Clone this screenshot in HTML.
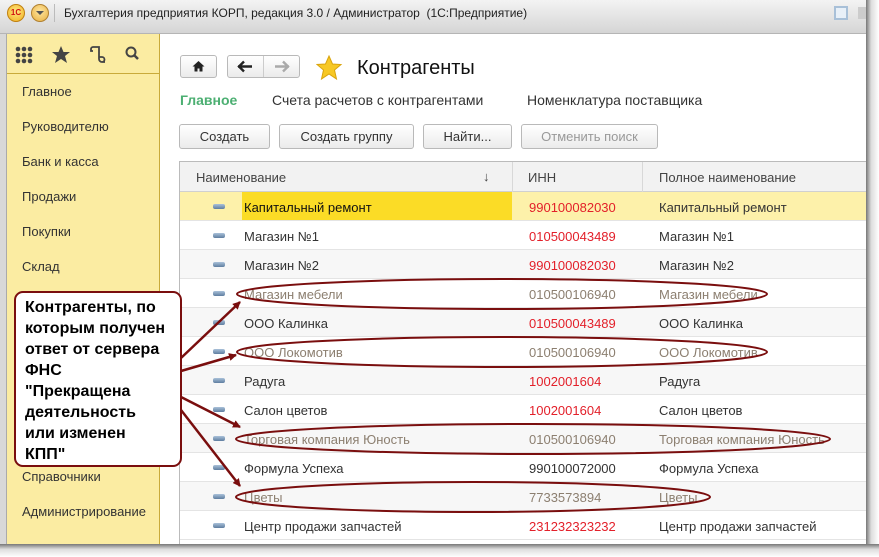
<!DOCTYPE html>
<html><head><meta charset="utf-8"><style>
*{margin:0;padding:0;box-sizing:border-box}
body{width:879px;height:557px;background:#fff;position:relative;overflow:hidden;font-family:"Liberation Sans",Arial,sans-serif;font-size:13px;color:#333}
.a{position:absolute}
.btn{position:absolute;height:25px;border:1px solid #b9b9b9;border-radius:3px;background:linear-gradient(#fff,#ebebeb);text-align:center;line-height:23px;color:#333;font-size:13px}
.row{position:absolute;left:180px;width:686px;height:29px;border-bottom:1px solid #e4e4e4}
.row div{position:absolute;top:0;line-height:31px;white-space:nowrap}
.row div.ic{left:33px;top:12px;width:12px;height:5px;border-radius:2px;background:linear-gradient(#a9c1d9,#5f7ea0);}
.n{left:64px}.i{left:349px}.f{left:479px}
.g{color:#8c7f70}.r{color:#e3202a}
.side div{position:absolute;left:22px;color:#333;font-size:13px}
</style></head><body>
<div class="a" style="left:0;top:0;width:866px;height:34px;background:linear-gradient(#f3f3f3,#d5d5d5);border-bottom:1px solid #b5b5b5"></div>
<div class="a" style="left:7px;top:4px;width:18px;height:18px;border-radius:50%;background:radial-gradient(circle at 50% 40%,#ffe680,#f0b020);border:1px solid #c08010;font-size:8px;font-weight:bold;color:#d01010;text-align:center;line-height:16px">1С</div>
<div class="a" style="left:31px;top:4px;width:18px;height:18px;border-radius:50%;background:radial-gradient(circle at 50% 40%,#ffe6a0,#e8b040);border:1px solid #b08030"></div>
<div class="a" style="left:36px;top:11px;width:0;height:0;border-left:4px solid transparent;border-right:4px solid transparent;border-top:4px solid #555"></div>
<div class="a" style="left:54px;top:4px;width:1px;height:18px;background:#bbb"></div>
<div class="a" style="left:64px;top:6px;font-size:12px;color:#222">Бухгалтерия предприятия КОРП, редакция 3.0 / Администратор &nbsp;(1С:Предприятие)</div>
<div class="a" style="left:834px;top:6px;width:14px;height:14px;border:2px solid #a8c0d8;background:#e8f0f8"></div>
<div class="a" style="left:858px;top:7px;width:8px;height:12px;background:#ccc"></div>
<div class="a" style="left:0;top:34px;width:7px;height:511px;background:#d8d8d8;border-right:1px solid #aaa"></div>
<div class="a side" style="left:7px;top:34px;width:153px;height:511px;background:#fbeca2;border-right:1px solid #c9aa3a">
<div class="a" style="left:0;top:0;width:152px;height:40px;border-bottom:1px solid #c9aa3a;position:absolute"></div>
</div>
<svg class="a" style="left:0;top:34px" width="160" height="40">
<g fill="#444"><circle cx="18" cy="15" r="2.3"/><circle cx="24" cy="15" r="2.3"/><circle cx="30" cy="15" r="2.3"/><circle cx="18" cy="21" r="2.3"/><circle cx="24" cy="21" r="2.3"/><circle cx="30" cy="21" r="2.3"/><circle cx="18" cy="27" r="2.3"/><circle cx="24" cy="27" r="2.3"/><circle cx="30" cy="27" r="2.3"/>
<polygon points="61,12 63.5,18 70,18 65,22 67,29 61,25 55,29 57,22 52,18 58.5,18"/></g>
<path d="M93 13h6v12a3 3 0 0 0 3 3h3M93 13a2 2 0 0 0-2 2v2h2M99 13v12M102 28a2.5 2.5 0 0 0 0-5h-3" fill="none" stroke="#444" stroke-width="1.8"/>
<circle cx="131" cy="18" r="4.5" fill="none" stroke="#444" stroke-width="2"/><path d="M134 21l4 4" stroke="#444" stroke-width="2.5"/>
</svg>
<div class="side">
<div style="top:84px">Главное</div>
<div style="top:119px">Руководителю</div>
<div style="top:154px">Банк и касса</div>
<div style="top:189px">Продажи</div>
<div style="top:224px">Покупки</div>
<div style="top:259px">Склад</div>
<div style="top:469px">Справочники</div>
<div style="top:504px">Администрирование</div>
</div>
<div class="btn" style="left:180px;top:55px;width:37px;height:23px"></div>
<svg class="a" style="left:180px;top:55px" width="37" height="23"><path d="M18.5 6l-6 5.5h2v5h3v-3h2v3h3v-5h2z" fill="#222"/></svg>
<div class="btn" style="left:227px;top:55px;width:73px;height:23px"></div>
<div class="a" style="left:263px;top:56px;width:1px;height:21px;background:#ccc"></div>
<svg class="a" style="left:227px;top:55px" width="73" height="23"><path d="M11 11.5h14M17 6.5l-5 5 5 5" fill="none" stroke="#222" stroke-width="2.4"/><path d="M48 11.5h14M56 6.5l5 5-5 5" fill="none" stroke="#aaa" stroke-width="2.4"/></svg>
<svg class="a" style="left:316px;top:55px" width="28" height="26"><polygon points="13,1 16.5,9 25,9.5 18.5,15 20.5,24 13,19 5.5,24 7.5,15 1,9.5 9.5,9" fill="#f7c824" stroke="#d9a40e"/></svg>
<div class="a" style="left:357px;top:57px;font-size:20px;color:#111">Контрагенты</div>
<div class="a" style="left:180px;top:92px;font-size:14px;font-weight:bold;color:#4caf72">Главное</div>
<div class="a" style="left:272px;top:92px;font-size:14px;color:#333">Счета расчетов с контрагентами</div>
<div class="a" style="left:527px;top:92px;font-size:14px;color:#333">Номенклатура поставщика</div>
<div class="btn" style="left:179px;top:124px;width:91px">Создать</div>
<div class="btn" style="left:279px;top:124px;width:135px">Создать группу</div>
<div class="btn" style="left:423px;top:124px;width:89px">Найти...</div>
<div class="btn" style="left:521px;top:124px;width:137px;color:#999">Отменить поиск</div>
<div class="a" style="left:179px;top:161px;width:687px;height:384px;border-left:1px solid #bbb;border-top:1px solid #bbb"></div>
<div class="a" style="left:180px;top:162px;width:686px;height:30px;background:#f2f2f2;border-bottom:1px solid #d0d0d0"></div>
<div class="a" style="left:512px;top:162px;width:1px;height:30px;background:#d8d8d8"></div>
<div class="a" style="left:642px;top:162px;width:1px;height:30px;background:#d8d8d8"></div>
<div class="a" style="left:196px;top:170px;color:#444">Наименование</div>
<div class="a" style="left:483px;top:169px;color:#444">↓</div>
<div class="a" style="left:528px;top:170px;color:#444">ИНН</div>
<div class="a" style="left:659px;top:170px;color:#444">Полное наименование</div>
<div class="row" style="top:192px;background:#fdf1aa"><div style="left:62px;width:270px;height:28px;background:#fbdc26"></div><div class="ic"></div><div class="n" style="color:#111">Капитальный ремонт</div><div class="i r">990100082030</div><div class="f">Капитальный ремонт</div></div>
<div class="row" style="top:221px"><div class="ic"></div><div class="n">Магазин №1</div><div class="i r">010500043489</div><div class="f">Магазин №1</div></div>
<div class="row" style="top:250px;background:#f7f7f7"><div class="ic"></div><div class="n">Магазин №2</div><div class="i r">990100082030</div><div class="f">Магазин №2</div></div>
<div class="row" style="top:279px"><div class="ic"></div><div class="n g">Магазин мебели</div><div class="i g">010500106940</div><div class="f g">Магазин мебели</div></div>
<div class="row" style="top:308px;background:#f7f7f7"><div class="ic"></div><div class="n">ООО Калинка</div><div class="i r">010500043489</div><div class="f">ООО Калинка</div></div>
<div class="row" style="top:337px"><div class="ic"></div><div class="n g">ООО Локомотив</div><div class="i g">010500106940</div><div class="f g">ООО Локомотив</div></div>
<div class="row" style="top:366px;background:#f7f7f7"><div class="ic"></div><div class="n">Радуга</div><div class="i r">1002001604</div><div class="f">Радуга</div></div>
<div class="row" style="top:395px"><div class="ic"></div><div class="n">Салон цветов</div><div class="i r">1002001604</div><div class="f">Салон цветов</div></div>
<div class="row" style="top:424px;background:#f7f7f7"><div class="ic"></div><div class="n g">Торговая компания Юность</div><div class="i g">010500106940</div><div class="f g">Торговая компания Юность</div></div>
<div class="row" style="top:453px"><div class="ic"></div><div class="n">Формула Успеха</div><div class="i">990100072000</div><div class="f">Формула Успеха</div></div>
<div class="row" style="top:482px;background:#f7f7f7"><div class="ic"></div><div class="n g">Цветы</div><div class="i g">7733573894</div><div class="f g">Цветы</div></div>
<div class="row" style="top:511px"><div class="ic"></div><div class="n">Центр продажи запчастей</div><div class="i r">231232323232</div><div class="f">Центр продажи запчастей</div></div>
<div class="a" style="left:866px;top:0;width:13px;height:557px;background:linear-gradient(90deg,#777,#ddd 40%,#fff)"></div>
<div class="a" style="left:0;top:544px;width:879px;height:13px;background:linear-gradient(#777,#ddd 40%,#fff)"></div>
<svg class="a" style="left:0;top:0" width="879" height="557">
<defs><marker id="m" markerWidth="8" markerHeight="8" refX="7" refY="4" orient="auto" markerUnits="userSpaceOnUse"><path d="M0,0L8,4L0,8z" fill="#7a0e0e"/></marker></defs>
<g fill="none" stroke="#7a0e0e" stroke-width="2">
<rect x="15" y="292" width="166" height="174" rx="8" fill="#fff"/>
<ellipse cx="502" cy="294" rx="265" ry="15"/>
<ellipse cx="502" cy="352" rx="265" ry="15"/>
<ellipse cx="533" cy="439" rx="297" ry="15"/>
<ellipse cx="473" cy="497" rx="237" ry="15"/>
<g stroke-width="2.5" marker-end="url(#m)">
<line x1="181" y1="358" x2="240" y2="302"/>
<line x1="181" y1="371" x2="236" y2="355"/>
<line x1="181" y1="397" x2="240" y2="427"/>
<line x1="181" y1="410" x2="240" y2="486"/>
</g></g>
</svg>
<div class="a" style="left:25px;top:297px;width:160px;font-size:16px;font-weight:bold;color:#000;line-height:21px;white-space:nowrap">Контрагенты, по<br>которым получен<br>ответ от сервера<br>ФНС<br>"Прекращена<br>деятельность<br>или изменен<br>КПП"</div>
</body></html>
